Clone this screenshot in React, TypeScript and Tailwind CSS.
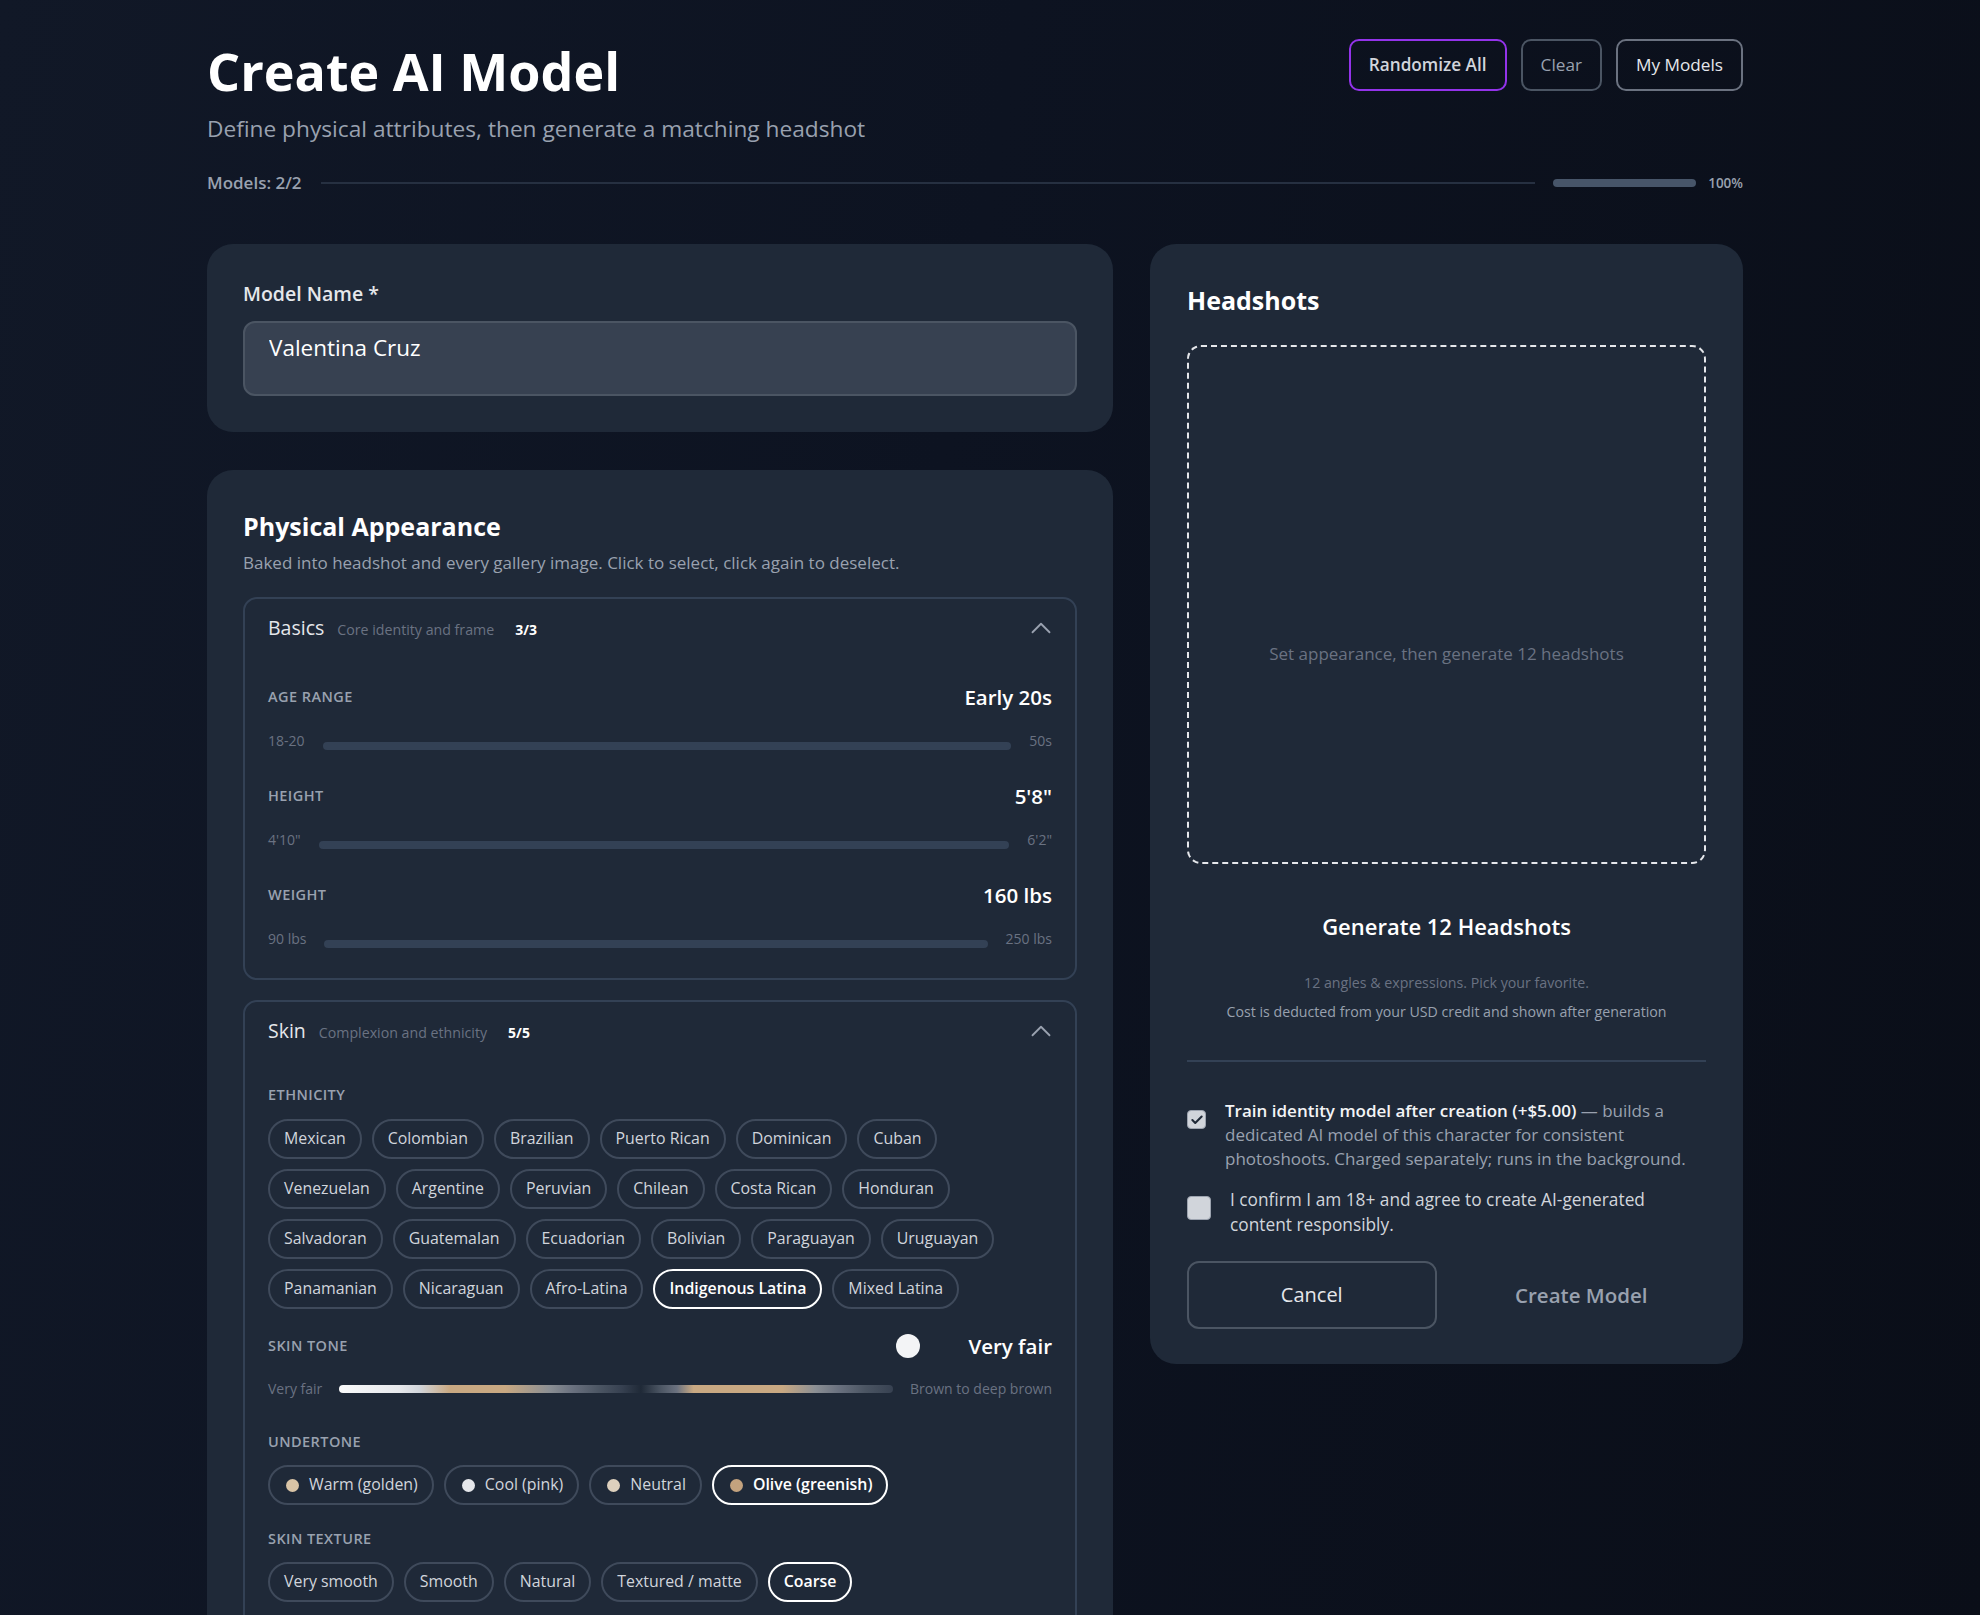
import { Check, ChevronUp } from 'lucide-react';

const ethnicityRows = [
  ['Mexican', 'Colombian', 'Brazilian', 'Puerto Rican', 'Dominican', 'Cuban'],
  ['Venezuelan', 'Argentine', 'Peruvian', 'Chilean', 'Costa Rican', 'Honduran'],
  ['Salvadoran', 'Guatemalan', 'Ecuadorian', 'Bolivian', 'Paraguayan', 'Uruguayan'],
  ['Panamanian', 'Nicaraguan', 'Afro-Latina', 'Indigenous Latina', 'Mixed Latina'],
];

const undertones = [
  { label: 'Warm (golden)', dot: 'bg-[#d9c4a6]' },
  { label: 'Cool (pink)', dot: 'bg-[#e5e7eb]' },
  { label: 'Neutral', dot: 'bg-[#ddd0bd]' },
  { label: 'Olive (greenish)', dot: 'bg-[#c3a27e]' },
];

const textures = ['Very smooth', 'Smooth', 'Natural', 'Textured / matte', 'Coarse'];

const basics = [
  { label: 'Age Range', value: 'Early 20s', min: '18-20', max: '50s' },
  { label: 'Height', value: '5\'8"', min: '4\'10"', max: '6\'2"' },
  { label: 'Weight', value: '160 lbs', min: '90 lbs', max: '250 lbs' },
];

function Chip({ label, selected, dot }: { label: string; selected?: boolean; dot?: string }) {
  return (
    <button
      className={`inline-flex h-[40px] items-center rounded-full border-2 px-[14px] text-[15.9px] ${
        selected ? 'border-white font-semibold text-white' : 'border-[#3f4a5b] text-gray-300'
      }`}
    >
      {dot && <span className={`mr-[10px] ml-[2px] h-[13px] w-[13px] rounded-full ${dot}`} />}
      {label}
    </button>
  );
}

function FieldLabel({ children }: { children: React.ReactNode }) {
  return (
    <div className="text-[14.5px] leading-[22px] font-semibold uppercase tracking-[0.03em] text-gray-400">
      {children}
    </div>
  );
}

function GroupHeader({ title, hint, count }: { title: string; hint: string; count: string }) {
  return (
    <div className="flex h-[58px] items-center justify-between pl-[23px] pr-[17px]">
      <div className="flex items-baseline">
        <span className="text-[19.5px] font-medium text-gray-200">{title}</span>
        <span className="ml-[13px] text-[14.2px] text-gray-500">{hint}</span>
        <span className="ml-[21px] text-[14px] font-bold text-white">{count}</span>
      </div>
      <ChevronUp size={34} strokeWidth={1.3} className="text-gray-400" />
    </div>
  );
}

function RangeField({ label, value, min, max }: { label: string; value: string; min: string; max: string }) {
  return (
    <div>
      <div className="flex h-[30px] items-center justify-between">
        <FieldLabel>{label}</FieldLabel>
        <span className="text-[20.5px] font-semibold text-white">{value}</span>
      </div>
      <div className="mt-[18px] flex h-[22px] items-end gap-[18px] text-[14px] leading-[22px] text-gray-500">
        <span>{min}</span>
        <div className="mb-[2px] h-[8px] flex-1 rounded-full bg-[#334155]" />
        <span>{max}</span>
      </div>
    </div>
  );
}

export default function App() {
  return (
    <div className="min-h-screen bg-[linear-gradient(100deg,#111827_0%,#0d1321_45%,#0a0e18_100%)] font-['Open_Sans',sans-serif]">
      <div className="w-[1743px] pl-[207px] pt-[39px]">
        {/* Page header */}
        <header className="flex items-start justify-between">
          <div>
            <h1 className="mt-[6px] text-[52px] leading-[52px] font-bold text-white">Create AI Model</h1>
            <p className="mt-[17px] text-[22.7px] leading-[30px] text-gray-400">
              Define physical attributes, then generate a matching headshot
            </p>
          </div>
          <div className="flex gap-[14px]">
            <button className="h-[52px] rounded-[10px] border-2 border-[#9333ea] px-[18px] text-[17.2px] font-semibold text-gray-300">
              Randomize All
            </button>
            <button className="h-[52px] rounded-[10px] border-2 border-[#4b5563] px-[18px] text-[17.2px] text-gray-400">
              Clear
            </button>
            <button className="h-[52px] rounded-[10px] border-2 border-[#6b7280] px-[18px] text-[17.2px] font-medium text-gray-200">
              My Models
            </button>
          </div>
        </header>

        <div className="mt-[27px] flex h-[24px] items-center">
          <span className="text-[17px] font-semibold text-gray-400">Models: 2/2</span>
          <div className="ml-[19px] h-[2px] flex-1 bg-[#263041]" />
          <div className="ml-[18px] h-[8px] w-[143px] rounded-full bg-[#475569]" />
          <span className="ml-[12px] text-[13.5px] font-semibold text-gray-400">100%</span>
        </div>

        <div className="mt-[49px] flex items-start gap-[37px]">
          {/* Left column */}
          <div className="flex w-[906px] flex-col gap-[38px]">
            <section className="rounded-[26px] bg-[#1f2938] p-[36px]">
              <label className="block text-[19.5px] leading-[28px] font-semibold text-gray-200">Model Name *</label>
              <input
                defaultValue="Valentina Cruz"
                className="mt-[13px] h-[75px] w-full rounded-[12px] border-2 border-[#4b5563] bg-[#374151] px-[24px] pt-[2px] pb-[25px] text-[22.5px] text-white outline-none"
              />
            </section>

            <section className="rounded-[26px] bg-[#1f2938] px-[36px] pt-[40px] pb-[36px]">
              <h2 className="text-[25px] leading-[32px] font-bold text-white">Physical Appearance</h2>
              <p className="mt-[9px] text-[17px] leading-[24px] text-gray-400">
                Baked into headshot and every gallery image. Click to select, click again to deselect.
              </p>

              <div className="mt-[22px] flex flex-col gap-[20px]">
                <div className="rounded-[14px] border-2 border-[#334155]">
                  <GroupHeader title="Basics" hint="Core identity and frame" count="3/3" />
                  <div className="flex flex-col gap-[29px] px-[23px] pt-[25px] pb-[28px]">
                    {basics.map((b) => (
                      <RangeField key={b.label} {...b} />
                    ))}
                  </div>
                </div>

                <div className="rounded-[14px] border-2 border-[#334155]">
                  <GroupHeader title="Skin" hint="Complexion and ethnicity" count="5/5" />
                  <div className="px-[23px] pt-[24px] pb-[28px]">
                    <FieldLabel>Ethnicity</FieldLabel>
                    <div className="mt-[13px] flex flex-col gap-[10px]">
                      {ethnicityRows.map((row, i) => (
                        <div key={i} className="flex gap-[10px]">
                          {row.map((name) => (
                            <Chip key={name} label={name} selected={name === 'Indigenous Latina'} />
                          ))}
                        </div>
                      ))}
                    </div>

                    <div className="mt-[22px] flex h-[30px] items-center justify-between">
                      <FieldLabel>Skin Tone</FieldLabel>
                      <div className="flex items-center gap-[48px]">
                        <span className="h-[24px] w-[24px] rounded-full bg-[#f3f4f6]" />
                        <span className="text-[20.5px] font-semibold text-white">Very fair</span>
                      </div>
                    </div>
                    <div className="mt-[17px] flex h-[22px] items-center gap-[17px] text-[14px] leading-[22px] text-gray-500">
                      <span>Very fair</span>
                      <div className="h-[8px] flex-1 rounded-full bg-[linear-gradient(to_right,#f9fafb_0%,#e5e7eb_11%,#d1d5db_14.5%,#c8a882_20%,#c8a882_30%,#8b8f94_38%,#6b7280_42%,#4b5563_47%,#374151_51%,#1f2937_54.5%,#4b5563_58%,#6b7280_61%,#c8a882_64%,#c8a882_80%,#8b8f94_86%,#6b7280_90%,#4b5563_95%,#374151_100%)]" />
                      <span>Brown to deep brown</span>
                    </div>

                    <div className="mt-[31px]">
                      <FieldLabel>Undertone</FieldLabel>
                    </div>
                    <div className="mt-[12px] flex gap-[10px]">
                      {undertones.map((u) => (
                        <Chip key={u.label} label={u.label} dot={u.dot} selected={u.label === 'Olive (greenish)'} />
                      ))}
                    </div>

                    <div className="mt-[23px]">
                      <FieldLabel>Skin Texture</FieldLabel>
                    </div>
                    <div className="mt-[12px] flex gap-[10px]">
                      {textures.map((t) => (
                        <Chip key={t} label={t} selected={t === 'Coarse'} />
                      ))}
                    </div>
                  </div>
                </div>
              </div>
            </section>
          </div>

          {/* Right column */}
          <section className="flex-1 rounded-[26px] bg-[#1f2938] px-[37px] pt-[40px] pb-[35px]">
            <h2 className="text-[25px] leading-[32px] font-bold text-white">Headshots</h2>
            <div className="mt-[29px] flex aspect-square w-full flex-col items-center justify-center rounded-[14px] border-2 border-dashed border-gray-200">
              <div className="h-[80px]" />
              <p className="mt-[18px] text-[17px] text-gray-500">Set appearance, then generate 12 headshots</p>
            </div>

            <div className="mt-[47px] text-center">
              <h3 className="text-[22px] leading-[30px] font-semibold text-white">Generate 12 Headshots</h3>
              <p className="mt-[32px] text-[14.2px] leading-[20px] text-gray-500">12 angles &amp; expressions. Pick your favorite.</p>
              <p className="mt-[9px] text-[14.2px] leading-[20px] text-gray-400">
                Cost is deducted from your USD credit and shown after generation
              </p>
            </div>

            <div className="mt-[38px] border-t-2 border-[#334155]" />

            <div className="mt-[37px] flex flex-col gap-[17px]">
              <label className="flex items-start gap-[19px]">
                <span className="mt-[11px] flex h-[19px] w-[19px] shrink-0 items-center justify-center rounded-[4px] border border-[#9ca3af] bg-[#d1d5db]">
                  <Check size={14} strokeWidth={3.5} className="text-[#1f2937]" />
                </span>
                <span className="text-[17px] leading-[24px] text-gray-400">
                  <span className="font-semibold text-gray-100">Train identity model after creation (+$5.00)</span> — builds a
                  <br />
                  dedicated AI model of this character for consistent
                  <br />
                  photoshoots. Charged separately; runs in the background.
                </span>
              </label>
              <label className="flex items-start gap-[19px]">
                <span className="mt-[8px] h-[24px] w-[24px] shrink-0 rounded-[4px] border border-[#9ca3af] bg-[#d1d5db]" />
                <span className="text-[17.3px] leading-[24.5px] text-gray-300">
                  I confirm I am 18+ and agree to create AI-generated
                  <br />
                  content responsibly.
                </span>
              </label>
            </div>

            <div className="mt-[24px] grid grid-cols-2 gap-[20px]">
              <button className="h-[68px] rounded-[12px] border-2 border-[#4b5563] text-[20px] text-gray-200">Cancel</button>
              <button className="h-[68px] text-[20.5px] font-semibold text-gray-400">Create Model</button>
            </div>
          </section>
        </div>
      </div>
    </div>
  );
}
